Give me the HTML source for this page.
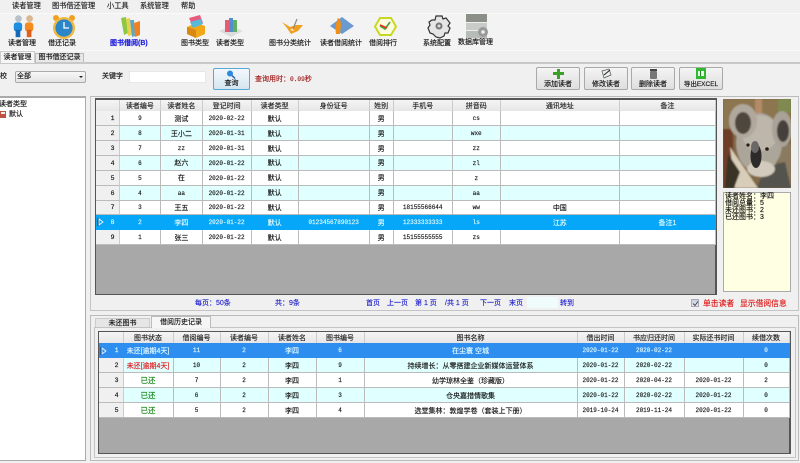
<!DOCTYPE html>
<html><head><meta charset="utf-8">
<style>
html,body{margin:0;padding:0;background:#f0f0f0;}
body{width:800px;height:463px;overflow:hidden;position:relative;font-family:"Liberation Sans","WenQuanYi Zen Hei","Noto Sans CJK SC",sans-serif;font-size:7px;color:#111;-webkit-text-stroke:.14px currentColor;}
#w{position:absolute;left:0;top:0;width:800px;height:463px;overflow:hidden;filter:blur(.25px);}
.a{position:absolute;white-space:nowrap;line-height:10px;}
.box{position:absolute;box-sizing:border-box;}
svg{position:absolute;overflow:visible;}
.m{top:1px;height:10px;color:#222;font-size:7.2px;}
.l{top:39px;color:#111;font-size:7px;text-align:center;}
.btn{position:absolute;top:67px;height:23px;width:44px;box-sizing:border-box;border:1px solid #a9a9a9;border-radius:2px;background:linear-gradient(#f4f4f4,#dedede);font-size:7px;text-align:center;padding-top:12px;line-height:10px;}
table{position:absolute;border-collapse:collapse;table-layout:fixed;background:#fff;}
td,th{padding:1px 0 0;text-align:center;overflow:hidden;white-space:nowrap;font-weight:normal;font-size:7px;border-right:1px solid #bbb;border-bottom:1px solid #bbb;box-sizing:border-box;color:#111;}
th{background:linear-gradient(#f5f5f5,#e6e6e6);border-right:1px solid #ccc;border-bottom:none;color:#222;}
td.r{background:#f0f0f0;text-align:right;padding-right:4px;font-family:"Liberation Mono",monospace;font-size:6.5px;border-right:1px solid #ccc;}
tr.c td{background:#e0ffff;}
tr.c td.r{background:#f0f0f0;}
tr.s td,tr.s td.r{background:#06a6f8;color:#e4fbff;border-color:#06a6f8;}
tr.t td,tr.t td.r{background:#2d8ef0;color:#e4fbff;border-color:#2d8ef0;}
.n{font-family:"Liberation Mono",monospace;font-size:6px;}
.g{color:#1a8a1a;font-size:7.5px;}
td.d,.d{color:#e01818;}
.p{top:299px;color:#2222cc;font-size:7px;}
.big{font-size:7.8px;}
</style></head><body><div id="w">

<!-- menu -->
<div class="a m" style="left:12px">读者管理</div>
<div class="a m" style="left:52px">图书借还管理</div>
<div class="a m" style="left:107px">小工具</div>
<div class="a m" style="left:140px">系统管理</div>
<div class="a m" style="left:181px">帮助</div>

<!-- toolbar -->
<div class="box" style="left:0;top:13px;width:800px;height:38px;background:#f3f3f3;border-top:1px solid #fafafa;border-bottom:1px solid #fafafa;"></div>

<svg style="left:11px;top:14px" width="26" height="25" viewBox="0 0 28 25">
<circle cx="8" cy="4" r="3.6" fill="#b8c0c8"/><rect x="3" y="8" width="9" height="10" rx="3" fill="#1e8fe0"/><rect x="5" y="16" width="5" height="8" fill="#1668b8"/>
<circle cx="20" cy="4" r="3.6" fill="#d8b890"/><rect x="15" y="8" width="9" height="10" rx="3" fill="#f58a1e"/><rect x="17" y="16" width="5" height="8" fill="#e0601a"/></svg>
<svg style="left:52px;top:14px" width="24" height="26" viewBox="0 0 24 26">
<circle cx="4" cy="4" r="3" fill="#f0a020"/><circle cx="20" cy="4" r="3" fill="#f0a020"/>
<circle cx="12" cy="14" r="11" fill="#f2b840"/><circle cx="12" cy="14" r="8.6" fill="#2a86c8"/><path d="M12 8v6h5" stroke="#fff" stroke-width="1.3" fill="none"/></svg>
<svg style="left:121px;top:16px" width="20" height="22" viewBox="0 0 20 22">
<path d="M0 2l5-1 2 16-4 2z" fill="#8cc840"/><path d="M5 3l4-1 2 17-4 1z" fill="#e8d050"/><path d="M9 4l4 0 1 16-3 1z" fill="#5aa8c8"/><path d="M13 7l6-2 0 14-5 2z" fill="#f08020"/></svg>
<svg style="left:186px;top:15px" width="20" height="23" viewBox="0 0 20 23">
<path d="M1 12l9-4 9 3v8l-9 4-9-4z" fill="#f0a818"/><path d="M3 3l11-3 3 8-10 4z" fill="#e85a80"/><path d="M4 7l11-3 2 5-10 4z" fill="#58b8d8"/><path d="M1 12l9 3v8l-9-4z" fill="#d88810"/></svg>
<svg style="left:219px;top:17px" width="24" height="20" viewBox="0 0 24 20">
<path d="M0 14l12-5 12 5-12 6z" fill="#ddd"/><rect x="6" y="3" width="4" height="12" fill="#e85a70"/><rect x="10" y="1" width="4" height="14" fill="#5090d0"/><rect x="14" y="3" width="4" height="12" fill="#60b060"/></svg>
<svg style="left:282px;top:18px" width="22" height="18" viewBox="0 0 22 18">
<path d="M0 4l8 5 6-2 7 0-5 6-7 3-4-6z" fill="#f0a020"/><path d="M8 12l3-2 1 3z" fill="#f8e8c8"/><path d="M11 11l4-10" stroke="#888" stroke-width="1.2"/></svg>
<svg style="left:330px;top:16px" width="24" height="20" viewBox="0 0 24 20">
<path d="M0 10l12-9 12 9-12 8z" fill="#6a9ad0"/><path d="M8 2c4 2 3 8 2 16h-4c-1-6 0-12 2-16z" fill="#f09018"/></svg>
<svg style="left:374px;top:17px" width="23" height="19" viewBox="0 0 23 19">
<path d="M1 9.500L6 1h11l5 8.500-5 8.500H6z" fill="#fdfbe0" stroke="#c8d820" stroke-width="2"/><path d="M6 9l5 3 5-7" stroke="#48a038" stroke-width="1.600" fill="none"/><path d="M6 8l7 3" stroke="#e03020" stroke-width="1.500"/></svg>
<svg style="left:427px;top:15px" width="24" height="24" viewBox="0 0 24 24">
<path d="M9 1h6l1 3 3-1 4 5-2 3 2 2-2 5-3 0-1 3-4 2-4-1-3-3-3-1-2-5 2-3-1-3 3-2 3 0z" fill="#e6e6e6" stroke="#333" stroke-width="1.200"/><circle cx="12" cy="11" r="3.500" fill="#777"/><circle cx="12" cy="11" r="1.500" fill="#ddd"/></svg>
<svg style="left:465px;top:14px" width="24" height="26" viewBox="0 0 24 26">
<rect x="1" y="0" width="21" height="8" fill="#8a9088"/><rect x="1" y="8" width="21" height="1" fill="#eee"/><rect x="1" y="9" width="21" height="7" fill="#c8ccc8"/><rect x="1" y="16" width="21" height="1" fill="#eee"/><rect x="1" y="17" width="21" height="7" fill="#b8bcb8"/><circle cx="18" cy="18" r="5" fill="#999"/><circle cx="18" cy="18" r="1.800" fill="#eee"/></svg>

<div class="a l" style="left:8px">读者管理</div>
<div class="a l" style="left:48px">借还记录</div>
<div class="a l" style="left:110px;color:#1a1ae0;font-weight:bold;">图书借阅(B)</div>
<div class="a l" style="left:181px">图书类型</div>
<div class="a l" style="left:216px">读者类型</div>
<div class="a l" style="left:269px">图书分类统计</div>
<div class="a l" style="left:320px">读者借阅统计</div>
<div class="a l" style="left:369px">借阅排行</div>
<div class="a l" style="left:423px">系统配置</div>
<div class="a l" style="left:458px;top:38px">数据库管理</div>

<!-- tabs -->
<div class="box" style="left:0;top:62px;width:800px;height:2px;background:#c8c8c8;"></div>
<div class="box" style="left:0;top:51px;width:35px;height:12px;background:#f6f6f6;border:1px solid #ccc;border-bottom:none;text-align:center;line-height:11px;">读者管理</div>
<div class="box" style="left:35px;top:53px;width:49px;height:9px;background:#e8e8e8;border:1px solid #bbb;border-bottom:none;text-align:center;line-height:8px;">图书借还记录</div>

<!-- filter row -->
<div class="a" style="left:0;top:72px">校</div>
<div class="box" style="left:15px;top:71px;width:71px;height:12px;border:1px solid #aaa;border-radius:2px;background:linear-gradient(#f8f8f8,#e4e4e4);padding-left:1px;line-height:10px;">全部</div>
<div class="box" style="left:79px;top:76px;border:2px solid transparent;border-top:2px solid #222;"></div>
<div class="a" style="left:102px;top:72px">关键字</div>
<div class="box" style="left:129px;top:71px;width:77px;height:12px;background:#fff;border:1px solid #e8e8e8;"></div>
<div class="box" style="left:213px;top:68px;width:37px;height:22px;border:1px solid #58a8d8;border-radius:2px;background:linear-gradient(#f2f8fc,#d4e4f0);text-align:center;padding-top:10px;line-height:10px;font-size:7px;">查询</div>
<svg style="left:226px;top:70px" width="10" height="9" viewBox="0 0 10 9"><circle cx="4" cy="3.500" r="3" fill="#2a8ae0"/><path d="M6 5.500l3 3" stroke="#3060a0" stroke-width="1.500"/></svg>
<div class="a" style="left:255px;top:75px;color:#a01818;">查询用时：<span style="font-family:'Liberation Mono',monospace;font-size:6.200px">0.09</span>秒</div>

<div class="btn" style="left:536px">添加读者</div>
<div class="btn" style="left:584px">修改读者</div>
<div class="btn" style="left:631px">删除读者</div>
<div class="btn" style="left:679px;font-size:6.500px">导出EXCEL</div>
<svg style="left:553px;top:69px" width="11" height="10" viewBox="0 0 11 10"><path d="M4 0h3v3h4v3H7v4H4V6H0V3h4z" fill="#3aa028"/></svg>
<svg style="left:601px;top:68px" width="11" height="11" viewBox="0 0 11 11"><path d="M1 3l7-2 2 6-7 3z" fill="#e8f0e8" stroke="#555" stroke-width=".7"/><path d="M3 7l6-5" stroke="#222"/></svg>
<svg style="left:649px;top:69px" width="9" height="10" viewBox="0 0 9 10"><rect x="1" y="2" width="7" height="8" rx="1" fill="#777"/><rect x="1" y="0" width="7" height="2" fill="#444"/></svg>
<svg style="left:696px;top:68px" width="10" height="11" viewBox="0 0 10 11"><rect width="10" height="11" fill="#30b830"/><rect x="2" y="3" width="6" height="5" fill="#e8f8e8"/><rect x="4" y="3" width="1" height="5" fill="#208020"/></svg>

<!-- tree -->
<div class="box" style="left:0;top:96px;width:86px;height:365px;background:#fff;border:1px solid #aaa;border-left:none;border-top:2px solid #aaa;"></div>
<div class="a" style="left:-1px;top:100px;">读者类型</div>
<svg style="left:0;top:110px" width="7" height="9" viewBox="0 0 7 9"><rect x="0" y="1" width="6" height="7" fill="#c05040"/><rect x="1" y="2" width="4" height="2" fill="#eee"/></svg>
<div class="a" style="left:9px;top:110px;">默认</div>

<!-- upper frame -->
<div class="box" style="left:90px;top:96px;width:709px;height:215px;border:1px solid #c4c4c4;border-top:1px solid #bbb;background:#f0f0f0;"></div>
<div class="box" style="left:95px;top:98px;width:622px;height:197px;background:#a8a8a8;border:1px solid #555;border-top:2px solid #555;border-right:2px solid #555;"></div>

<table style="left:96px;top:100px;width:620px;">
<colgroup><col style="width:23px"><col style="width:41.700px"><col style="width:41.300px"><col style="width:49px"><col style="width:47px"><col style="width:71px"><col style="width:24px"><col style="width:59px"><col style="width:48px"><col style="width:119px"><col style="width:96px"></colgroup>
<tr style="height:11px"><th></th><th>读者编号</th><th>读者姓名</th><th>登记时间</th><th>读者类型</th><th>身份证号</th><th>姓别</th><th>手机号</th><th>拼音码</th><th>通讯地址</th><th>备注</th></tr>
<tr style="height:14.850px"><td class="r">1</td><td class="n">9</td><td>测试</td><td class="n">2020-02-22</td><td>默认</td><td></td><td>男</td><td class="n"></td><td class="n">cs</td><td></td><td></td></tr>
<tr class="c" style="height:14.850px"><td class="r">2</td><td class="n">8</td><td>王小二</td><td class="n">2020-01-31</td><td>默认</td><td></td><td>男</td><td class="n"></td><td class="n">wxe</td><td></td><td></td></tr>
<tr style="height:14.850px"><td class="r">3</td><td class="n">7</td><td class="n">zz</td><td class="n">2020-01-31</td><td>默认</td><td></td><td>男</td><td class="n"></td><td class="n">zz</td><td></td><td></td></tr>
<tr class="c" style="height:14.850px"><td class="r">4</td><td class="n">6</td><td>赵六</td><td class="n">2020-01-22</td><td>默认</td><td></td><td>男</td><td class="n"></td><td class="n">zl</td><td></td><td></td></tr>
<tr style="height:14.850px"><td class="r">5</td><td class="n">5</td><td>在</td><td class="n">2020-01-22</td><td>默认</td><td></td><td>男</td><td class="n"></td><td class="n">z</td><td></td><td></td></tr>
<tr class="c" style="height:14.850px"><td class="r">6</td><td class="n">4</td><td class="n">aa</td><td class="n">2020-01-22</td><td>默认</td><td></td><td>男</td><td class="n"></td><td class="n">aa</td><td></td><td></td></tr>
<tr style="height:14.850px"><td class="r">7</td><td class="n">3</td><td>王五</td><td class="n">2020-01-22</td><td>默认</td><td></td><td>男</td><td class="n">18155566644</td><td class="n">ww</td><td>中国</td><td></td></tr>
<tr class="s" style="height:14.850px"><td class="r">8</td><td class="n">2</td><td>李四</td><td class="n">2020-01-22</td><td>默认</td><td class="n">01234567890123</td><td>男</td><td class="n">12333333333</td><td class="n">ls</td><td>江苏</td><td>备注1</td></tr>
<tr style="height:14.850px"><td class="r">9</td><td class="n">1</td><td>张三</td><td class="n">2020-01-22</td><td>默认</td><td></td><td>男</td><td class="n">15155555555</td><td class="n">zs</td><td></td><td></td></tr>
</table>
<svg style="left:98px;top:218px" width="6" height="8" viewBox="0 0 6 8"><path d="M1 1l4 3-4 3z" fill="#06a6f8" stroke="#fff" stroke-width=".8"/><path d="M0 0v8" stroke="#123" stroke-width=".8"/></svg>

<!-- photo -->
<svg style="left:723px;top:99px;width:68px;height:89px" viewBox="0 0 68 89">
<defs><filter id="bl"><feGaussianBlur stdDeviation=".9"/></filter><clipPath id="cp"><rect width="68" height="89"/></clipPath></defs>
<g clip-path="url(#cp)"><rect width="68" height="89" fill="#80684a"/>
<g filter="url(#bl)">
<rect x="0" y="0" width="68" height="30" fill="#8c7650"/>
<rect x="32" y="0" width="7" height="16" fill="#b48a68"/>
<rect x="55" y="0" width="13" height="14" fill="#7e8a50"/>
<rect x="0" y="30" width="10" height="59" fill="#6e3c28"/>
<rect x="56" y="45" width="12" height="44" fill="#8a7a60"/>
<path d="M34 89c4-14 14-24 28-26l6 26z" fill="#55524e"/>
<path d="M7 48l28 41H12z" fill="#d8cdb8"/>
<path d="M5 55l12 18-6 16H2z" fill="#3a3028"/>
<ellipse cx="36" cy="44" rx="23" ry="30" fill="#aca59a"/>
<ellipse cx="37" cy="34" rx="18" ry="18" fill="#bdb6aa"/>
<ellipse cx="20" cy="22" rx="14" ry="17" fill="#b0a89c"/>
<ellipse cx="20" cy="24" rx="8" ry="11" fill="#4e463c"/>
<ellipse cx="59" cy="30" rx="10" ry="18" fill="#a8a298"/>
<ellipse cx="60" cy="32" rx="6" ry="11" fill="#45403a"/>
<ellipse cx="38" cy="70" rx="14" ry="8" fill="#d2cabc"/>
</g>
<ellipse cx="33" cy="57" rx="5.500" ry="12" fill="#2c2a2a"/>
<ellipse cx="32" cy="48" rx="4" ry="6" fill="#6a6866"/>
<circle cx="25" cy="46" r="1.600" fill="#2a1a14"/><circle cx="44" cy="50" r="1.800" fill="#2a1a14"/>
</g></svg>

<!-- info box -->
<div class="box" style="left:723px;top:192px;width:68px;height:100px;background:#ffffe4;border:1px solid #aaa;"></div>
<div class="a" style="left:725px;top:193px;line-height:7px;color:#111;">读者姓名：李四<br>借阅总量：5<br>未还图书：2<br>已还图书：3</div>

<!-- pager -->
<div class="a p" style="left:195px">每页：50条</div>
<div class="a p" style="left:275px">共：9条</div>
<div class="a p" style="left:366px">首页</div>
<div class="a p" style="left:387px">上一页</div>
<div class="a p" style="left:415px">第 1 页</div>
<div class="a p" style="left:445px">/共 1 页</div>
<div class="a p" style="left:480px">下一页</div>
<div class="a p" style="left:509px">末页</div>
<div class="box" style="left:527px;top:297px;width:31px;height:11px;background:#f0fbfb;"></div>
<div class="a p" style="left:560px">转到</div>
<div class="box" style="left:691px;top:299px;width:8px;height:8px;background:linear-gradient(#c8d0dc,#e8ecf0);border:1px solid #aab;"></div>
<svg style="left:692px;top:300px" width="7" height="7" viewBox="0 0 7 7"><path d="M1 3.500l2 2 3-4" stroke="#445" fill="none"/></svg>
<div class="a big d" style="left:703px;top:299px;">单击读者</div>
<div class="a big d" style="left:740px;top:299px;">显示借阅信息</div>

<!-- lower frame -->
<div class="box" style="left:90px;top:315px;width:709px;height:146px;border:1px solid #bbb;background:#f0f0f0;"></div>
<div class="box" style="left:94px;top:327px;width:702px;height:131px;border:1px solid #c4c4c4;background:#f0f0f0;"></div>
<div class="box" style="left:95px;top:318px;width:55px;height:9px;background:#e6e6e6;border:1px solid #ccc;border-bottom:none;text-align:center;line-height:9px;">未还图书</div>
<div class="box" style="left:151px;top:316px;width:60px;height:12px;background:#f6f6f6;border:1px solid #bbb;border-bottom:none;text-align:center;line-height:11px;">借阅历史记录</div>

<div class="box" style="left:98px;top:331px;width:693px;height:123px;background:#a8a8a8;border:1px solid #555;border-top:2px solid #555;border-right:2px solid #555;"></div>
<table style="left:99px;top:332px;width:690px;">
<colgroup><col style="width:24px"><col style="width:50px"><col style="width:47px"><col style="width:48px"><col style="width:48px"><col style="width:48px"><col style="width:213px"><col style="width:47px"><col style="width:60px"><col style="width:59px"><col style="width:46px"></colgroup>
<tr style="height:11px"><th></th><th>图书状态</th><th>借阅编号</th><th>读者编号</th><th>读者姓名</th><th>图书编号</th><th>图书名称</th><th>借出时间</th><th>书应归还时间</th><th>实际还书时间</th><th>续借次数</th></tr>
<tr class="t" style="height:14.900px"><td class="r">1</td><td>未还[逾期4天]</td><td class="n">11</td><td class="n">2</td><td>李四</td><td class="n">6</td><td>在尘寰 空城</td><td class="n">2020-01-22</td><td class="n">2020-02-22</td><td></td><td class="n">0</td></tr>
<tr class="c" style="height:14.900px"><td class="r">2</td><td class="d">未还[逾期4天]</td><td class="n">10</td><td class="n">2</td><td>李四</td><td class="n">9</td><td>持续增长：从零搭建企业新媒体运营体系</td><td class="n">2020-01-22</td><td class="n">2020-02-22</td><td></td><td class="n">0</td></tr>
<tr style="height:14.900px"><td class="r">3</td><td class="g">已还</td><td class="n">7</td><td class="n">2</td><td>李四</td><td class="n">1</td><td>幼学琼林全鉴（珍藏版）</td><td class="n">2020-01-22</td><td class="n">2020-04-22</td><td class="n">2020-01-22</td><td class="n">2</td></tr>
<tr class="c" style="height:14.900px"><td class="r">4</td><td class="g">已还</td><td class="n">6</td><td class="n">2</td><td>李四</td><td class="n">3</td><td>仓央嘉措情歌集</td><td class="n">2020-01-22</td><td class="n">2020-02-22</td><td class="n">2020-01-22</td><td class="n">0</td></tr>
<tr style="height:14.900px"><td class="r">5</td><td class="g">已还</td><td class="n">5</td><td class="n">2</td><td>李四</td><td class="n">4</td><td>选堂集林：敦煌学卷（套装上下册）</td><td class="n">2019-10-24</td><td class="n">2019-11-24</td><td class="n">2020-01-22</td><td class="n">0</td></tr>
</table>
<svg style="left:101px;top:347px" width="6" height="8" viewBox="0 0 6 8"><path d="M1 1l4 3-4 3z" fill="#2d8ef0" stroke="#fff" stroke-width=".8"/><path d="M0 0v8" stroke="#123" stroke-width=".8"/></svg>

</div></body></html>
